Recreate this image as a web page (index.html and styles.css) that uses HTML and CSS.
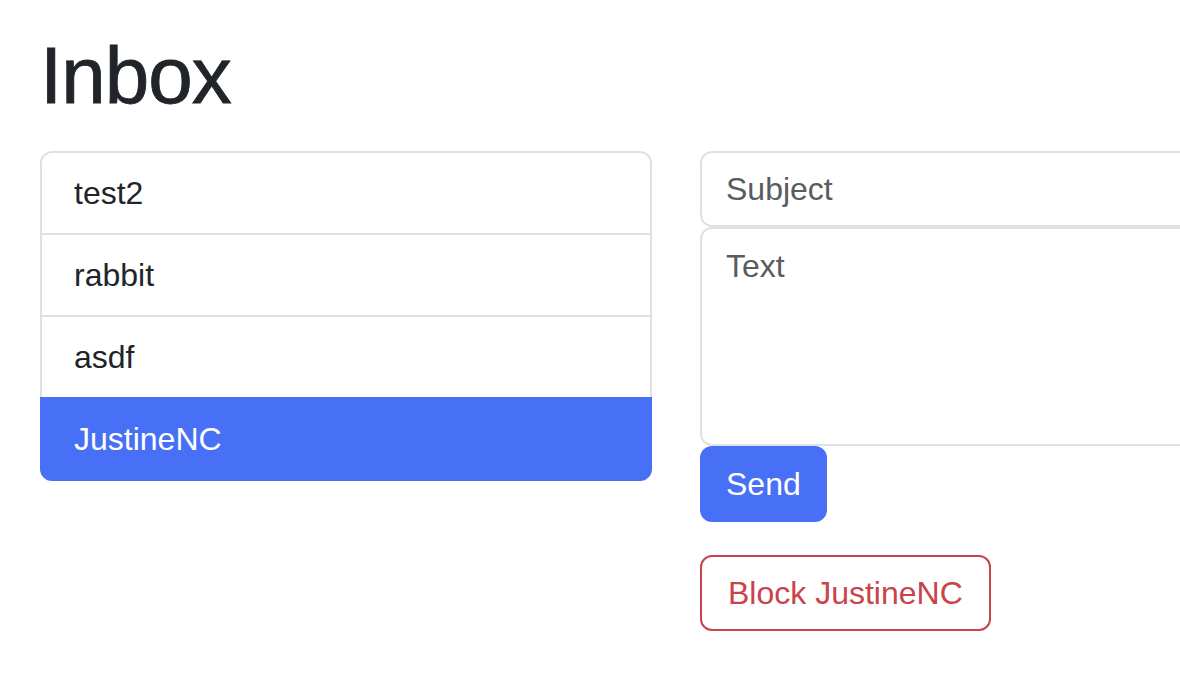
FILE: index.html
```html
<!DOCTYPE html>
<html>
<head>
<meta charset="utf-8">
<link rel="stylesheet" href="styles.css">
</head>
<body>
<div class="page">
  <h1 class="title">Inbox</h1>
  <div class="row">
    <div class="col-left">
      <ul class="list">
        <li class="item">test2</li>
        <li class="item">rabbit</li>
        <li class="item">asdf</li>
        <li class="item active">JustineNC</li>
      </ul>
    </div>
    <div class="col-right">
      <input class="field" type="text" placeholder="Subject">
      <textarea class="field area" placeholder="Text"></textarea>
      <button class="btn btn-primary">Send</button>
      <div class="block-wrap">
        <button class="btn btn-danger">Block JustineNC</button>
      </div>
    </div>
  </div>
</div>
</body>
</html>
```
FILE: styles.css
```css
html, body {
  margin: 0;
  padding: 0;
  background: #fff;
  overflow: hidden;
}
body {
  font-family: "Liberation Sans", Arial, sans-serif;
  font-size: 32px;
  line-height: 48px;
  color: #212529;
}
.page {
  padding: 28px 40px 0 40px;
  width: 1400px;
}
.title {
  margin: 0 0 27px 0;
  font-size: 80px;
  line-height: 96px;
  font-weight: 400;
  letter-spacing: -1px;
  color: #212529;
  -webkit-text-stroke: 0.8px #212529;
}
.row {
  display: flex;
  gap: 48px;
  align-items: flex-start;
}
.col-left {
  width: 612px;
  flex: none;
}
.col-right {
  width: 640px;
  flex: none;
  display: flex;
  flex-direction: column;
  align-items: flex-start;
}
.list {
  list-style: none;
  margin: 0;
  padding: 0;
}
.item {
  padding: 16px 32px;
  border: 2px solid #dee2e6;
  border-top: none;
  height: 48px;
}
.item:first-child {
  border-top: 2px solid #dee2e6;
  border-radius: 12px 12px 0 0;
}
.item:last-child {
  border-radius: 0 0 12px 12px;
}
.item.active {
  background: #4870f7;
  color: #fff;
  border-color: #4870f7;
  border-top: 2px solid #4870f7;
  margin-top: -2px;
}
.field {
  box-sizing: border-box;
  width: 100%;
  font-family: inherit;
  font-size: 32px;
  line-height: 48px;
  padding: 12px 24px;
  border: 2px solid #dee2e6;
  border-radius: 12px;
  color: #212529;
  background: #fff;
  margin: 0;
  display: block;
  outline: none;
}
.field::placeholder {
  color: #595c5f;
}
.area {
  height: 219px;
  margin-top: 0;
  padding-top: 13px;
  resize: none;
}
.btn {
  font-family: inherit;
  font-size: 32px;
  line-height: 48px;
  padding: 12px 24px;
  border-radius: 12px;
  border: 2px solid transparent;
  cursor: pointer;
  margin: 0;
}
.btn-primary {
  background: #4870f7;
  border-color: #4870f7;
  color: #fff;
  margin-top: 0;
}
.block-wrap {
  margin-top: 33px;
}
.btn-danger {
  background: #fff;
  border-color: #c9434b;
  color: #c9434b;
  padding: 12px 26px;
}
```
